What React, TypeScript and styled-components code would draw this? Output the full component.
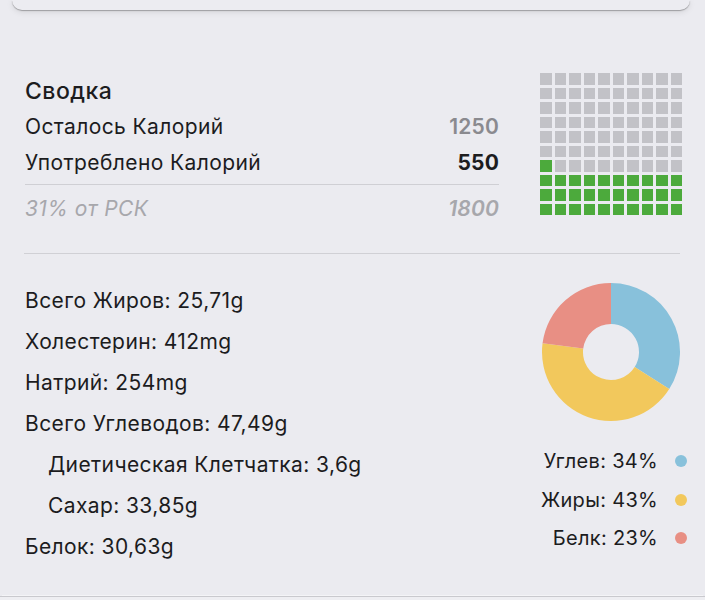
import React from "react";
import styled, { createGlobalStyle } from "styled-components";

const Global = createGlobalStyle`
  html, body { margin: 0; padding: 0; background: #ebebf0; }
  body { font-family: Inter, "Noto Sans", sans-serif; color: #1c1c1e; -webkit-font-smoothing: antialiased; }
`;

const Page = styled.div`
  width: 705px;
  height: 600px;
  background: #ebebf0;
  overflow: hidden;
`;

const TopCard = styled.div`
  height: 10px;
  margin: 0 15px 0 12px;
  background: #ececf1;
  border-radius: 0 0 12px 12px;
  box-shadow: 0 1px 1px rgba(0, 0, 0, 0.28), 0 2px 6px rgba(0, 0, 0, 0.1);
`;

const Summary = styled.section`
  display: flex;
  align-items: flex-start;
  gap: 41px;
  margin-top: 63px;
  padding: 0 23px 0 25px;
`;

const SummaryText = styled.div`
  flex: 1;
  margin-top: 3px;
`;

const Title = styled.div`
  font-size: 23px;
  font-weight: 500;
  line-height: 30px;
  letter-spacing: 0.5px;
  margin-bottom: 3px;
`;

const Row = styled.div<{ $muted?: boolean }>`
  display: flex;
  justify-content: space-between;
  align-items: baseline;
  font-size: 21px;
  letter-spacing: 0.4px;
  line-height: 36px;
  color: ${(p) => (p.$muted ? "#a7a7ac" : "#1c1c1e")};
  font-style: ${(p) => (p.$muted ? "italic" : "normal")};
`;

const Value = styled.span<{ $tone: "gray" | "bold" | "light" }>`
  font-weight: ${(p) => (p.$tone === "bold" ? 700 : 600)};
  letter-spacing: 0.2px;
  color: ${(p) =>
    p.$tone === "bold" ? "#1c1c1e" : p.$tone === "gray" ? "#8a8a8f" : "#a7a7ac"};
`;

const ThinRule = styled.div`
  height: 1px;
  background: #cfcfd4;
  margin: 3px 0 6px;
`;

const Waffle = styled.div`
  display: grid;
  grid-template-columns: repeat(10, 11.5px);
  grid-auto-rows: 11.5px;
  gap: 3px;
  flex-shrink: 0;
`;

const Cell = styled.div<{ $on: boolean }>`
  background: ${(p) => (p.$on ? "#4caa3c" : "#c2c2c7")};
`;

const Divider = styled.div`
  height: 1px;
  background: #d0d0d5;
  margin: 26px 25px 0 24px;
`;

const Nutrition = styled.section`
  display: flex;
  align-items: flex-start;
  padding: 26px 19px 0 25px;
`;

const List = styled.div`
  flex: 1;
`;

const Item = styled.div<{ $indent?: boolean }>`
  font-size: 21px;
  letter-spacing: 0.4px;
  line-height: 41px;
  padding-left: ${(p) => (p.$indent ? "23px" : "0")};
`;

const Side = styled.div`
  width: 146px;
  display: flex;
  flex-direction: column;
  margin-top: 1px;
`;

const Donut = styled.svg`
  display: block;
  width: 142px;
  height: 142px;
`;

const Legend = styled.div`
  margin-top: 19px;
  display: flex;
  flex-direction: column;
  align-items: flex-end;
`;

const LegendRow = styled.div`
  display: flex;
  align-items: center;
  gap: 17px;
  font-size: 20px;
  letter-spacing: 0.3px;
  line-height: 38.5px;
`;

const Dot = styled.span<{ $color: string }>`
  width: 12px;
  height: 12px;
  border-radius: 50%;
  background: ${(p) => p.$color};
  margin-right: -1px;
`;

const Footer = styled.div`
  margin-top: 29px;
  height: 20px;
  border-top: 1px solid #c9c9ce;
  background: #eeeef2;
  box-shadow: 0 -3px 0 -2px #f4f4f7;
`;

const slices = [
  { label: "Углев", pct: 34, color: "#88c1db" },
  { label: "Жиры", pct: 43, color: "#f2c85c" },
  { label: "Белк", pct: 23, color: "#e88f84" },
];

function arcPath(cx: number, cy: number, r: number, ri: number, a0: number, a1: number) {
  const pt = (rad: number, a: number) => {
    const t = (a - 90) * (Math.PI / 180);
    return [cx + rad * Math.cos(t), cy + rad * Math.sin(t)];
  };
  const large = a1 - a0 > 180 ? 1 : 0;
  const [x0, y0] = pt(r, a0);
  const [x1, y1] = pt(r, a1);
  const [x2, y2] = pt(ri, a1);
  const [x3, y3] = pt(ri, a0);
  return `M${x0} ${y0} A${r} ${r} 0 ${large} 1 ${x1} ${y1} L${x2} ${y2} A${ri} ${ri} 0 ${large} 0 ${x3} ${y3} Z`;
}

const nutrients: { text: string; indent?: boolean }[] = [
  { text: "Всего Жиров: 25,71g" },
  { text: "Холестерин: 412mg" },
  { text: "Натрий: 254mg" },
  { text: "Всего Углеводов: 47,49g" },
  { text: "Диетическая Клетчатка: 3,6g", indent: true },
  { text: "Сахар: 33,85g", indent: true },
  { text: "Белок: 30,63g" },
];

export default function App() {
  const consumed = 31;
  let acc = 0;
  const arcs = slices.map((s) => {
    const a0 = (acc / 100) * 360;
    acc += s.pct;
    const a1 = (acc / 100) * 360;
    return { ...s, d: arcPath(71, 71, 69, 28, a0, a1) };
  });

  return (
    <Page>
      <Global />
      <TopCard />
      <Summary>
        <SummaryText>
          <Title>Сводка</Title>
          <Row>
            <span>Осталось Калорий</span>
            <Value $tone="gray">1250</Value>
          </Row>
          <Row>
            <span>Употреблено Калорий</span>
            <Value $tone="bold">550</Value>
          </Row>
          <ThinRule />
          <Row $muted>
            <span>31% от РСК</span>
            <Value $tone="light">1800</Value>
          </Row>
        </SummaryText>
        <Waffle>
          {Array.from({ length: 100 }, (_, i) => {
            const row = Math.floor(i / 10);
            const col = i % 10;
            const order = (9 - row) * 10 + col;
            return <Cell key={i} $on={order < consumed} />;
          })}
        </Waffle>
      </Summary>
      <Divider />
      <Nutrition>
        <List>
          {nutrients.map((n) => (
            <Item key={n.text} $indent={n.indent}>
              {n.text}
            </Item>
          ))}
        </List>
        <Side>
          <Donut viewBox="0 0 142 142">
            {arcs.map((a) => (
              <path key={a.label} d={a.d} fill={a.color} />
            ))}
          </Donut>
          <Legend>
            {slices.map((s) => (
              <LegendRow key={s.label}>
                <span>
                  {s.label}: {s.pct}%
                </span>
                <Dot $color={s.color} />
              </LegendRow>
            ))}
          </Legend>
        </Side>
      </Nutrition>
      <Footer />
    </Page>
  );
}
